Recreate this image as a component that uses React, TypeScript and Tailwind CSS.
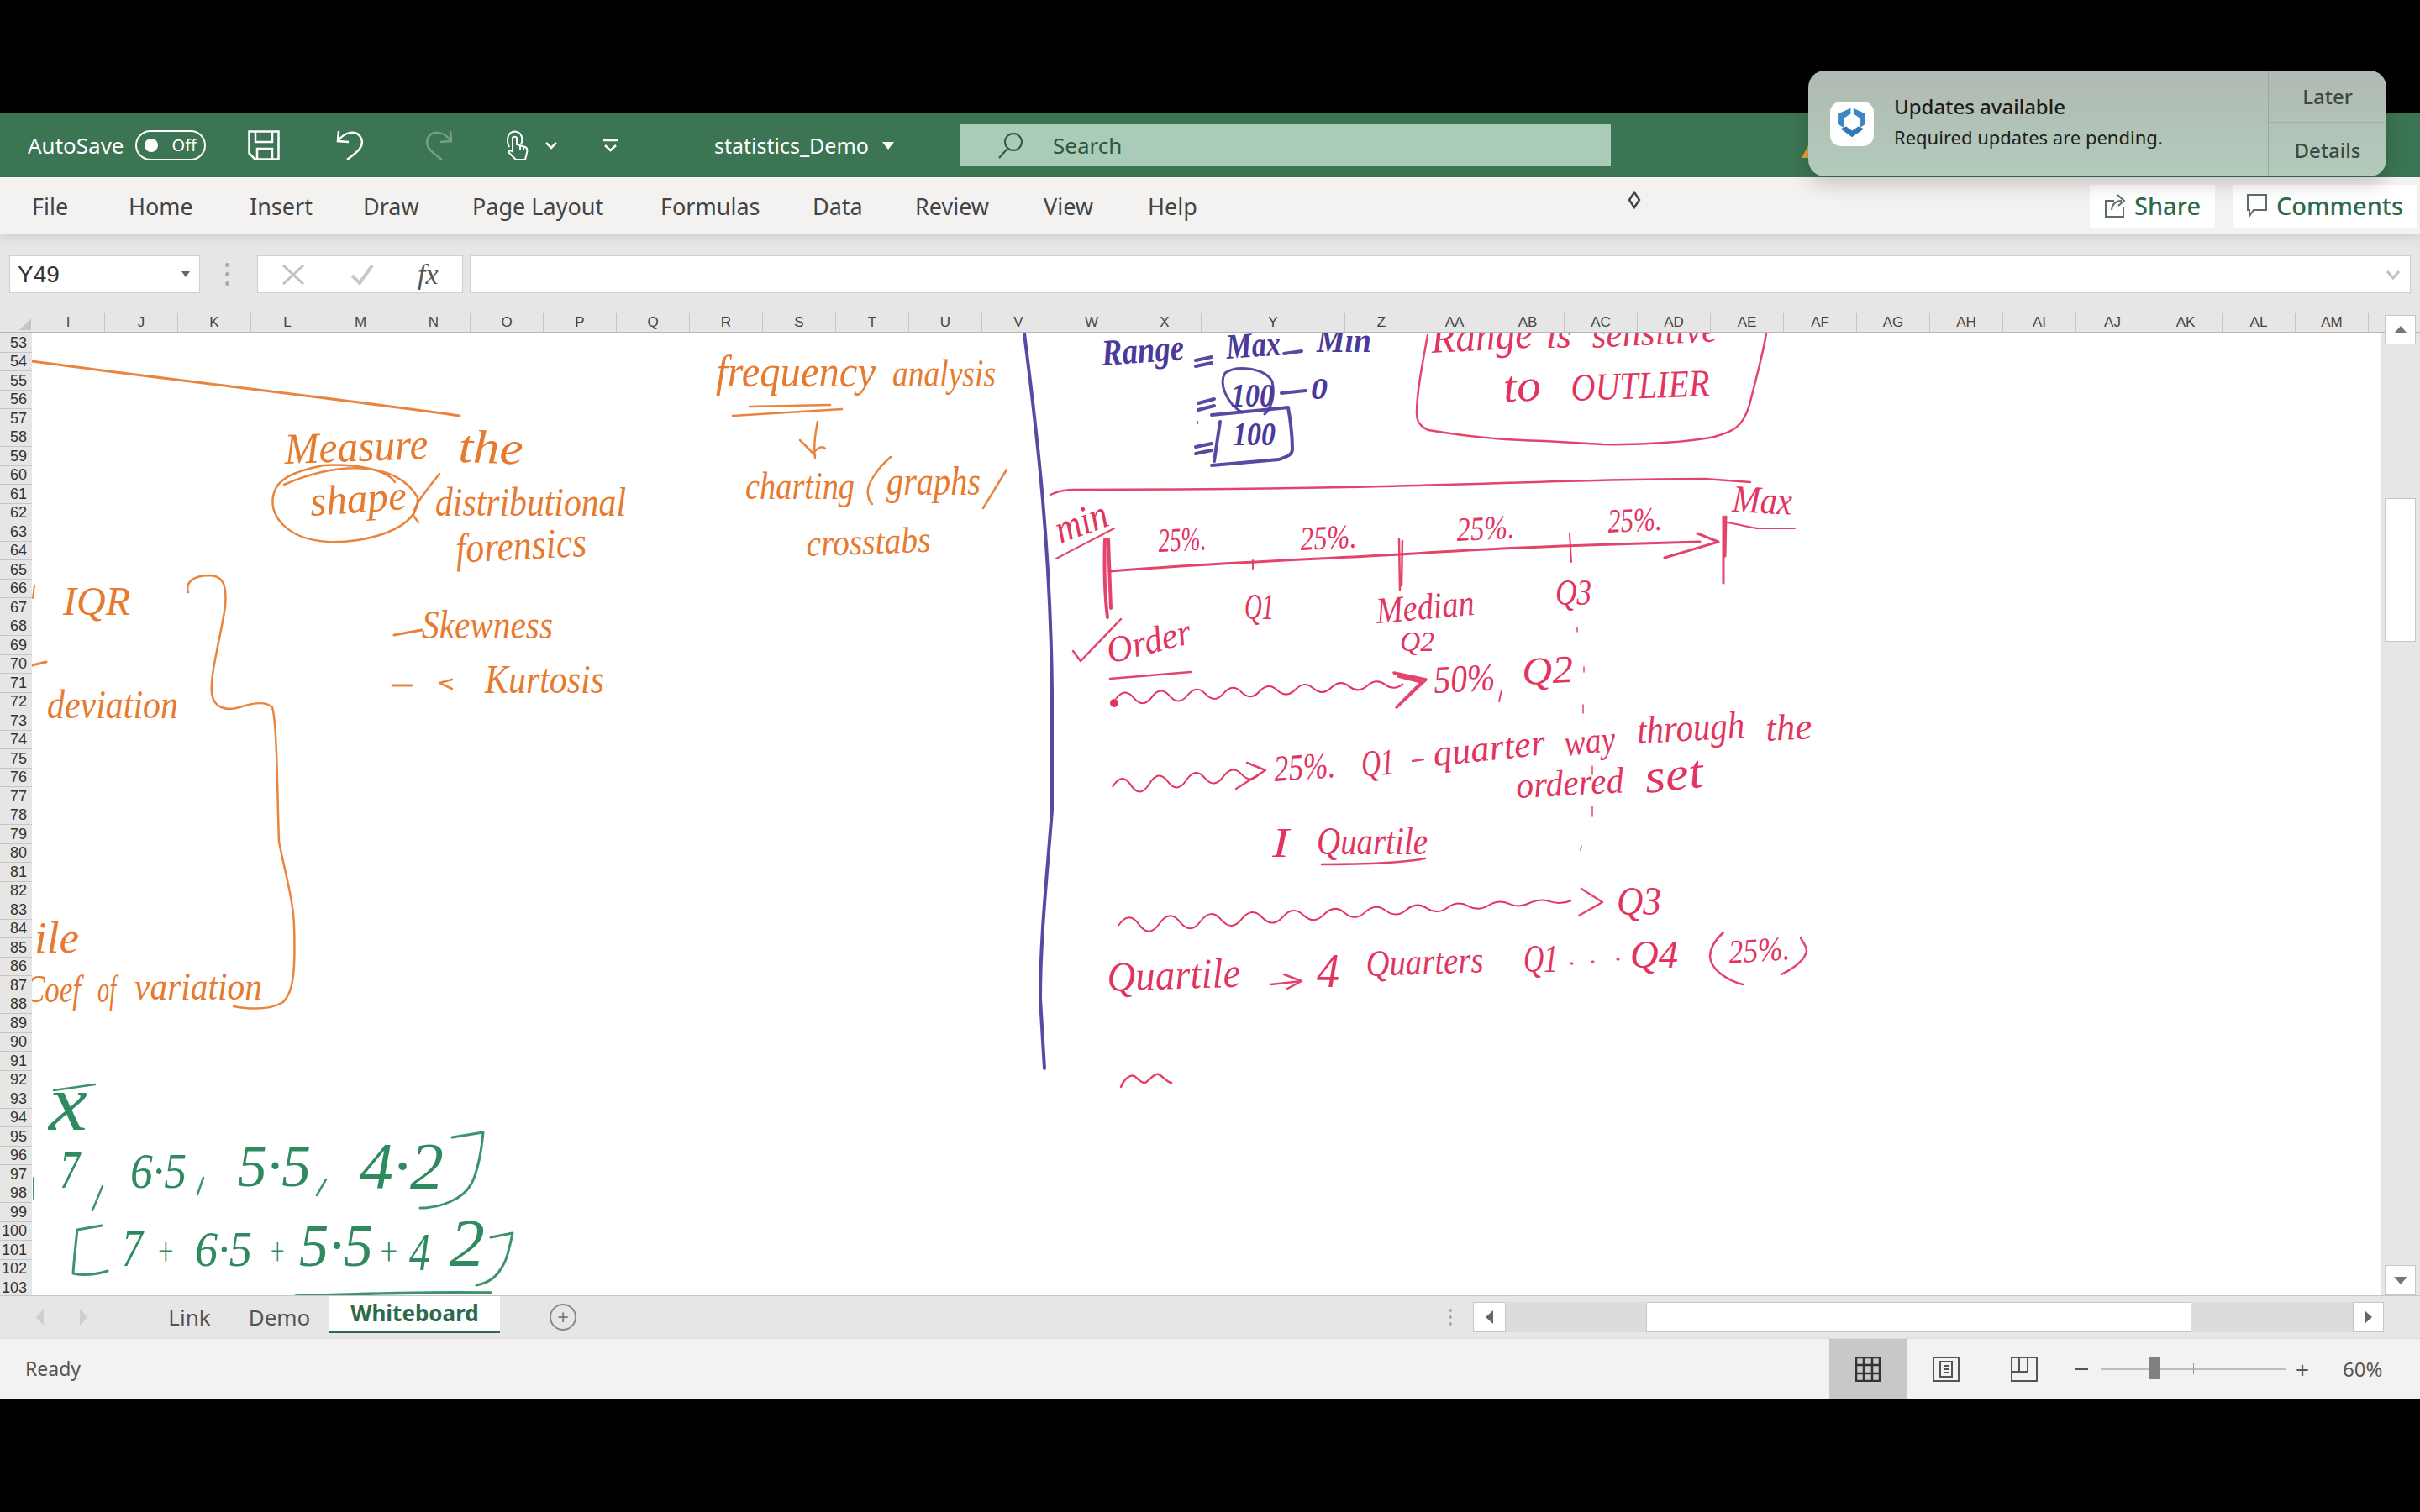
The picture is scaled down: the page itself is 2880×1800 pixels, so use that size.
const ORANGE = "#e67a2e";
const PURPLE = "#4a3a9a";
const PINK = "#e2345f";
const GREEN = "#2f8a60";

const leftCols = ["I", "J", "K", "L", "M", "N", "O", "P", "Q", "R", "S", "T", "U", "V", "W", "X"];
const rightCols = ["Z", "AA", "AB", "AC", "AD", "AE", "AF", "AG", "AH", "AI", "AJ", "AK", "AL", "AM"];
const rows = Array.from({ length: 51 }, (_, i) => 53 + i);

// handwritten words: text, left, right, baseline, colour, size, rotation
type Note = [string, number, number, number, string, number, number?, number?];
const notes: Note[] = [
  ["Measure", 339, 510, 550, ORANGE, 52, -2],
  ["the", 545, 622, 548, ORANGE, 56, 2],
  ["shape", 370, 485, 612, ORANGE, 50, -4],
  ["distributional", 518, 745, 612, ORANGE, 48],
  ["forensics", 543, 699, 668, ORANGE, 50, -3],
  ["IQR", 75, 155, 730, ORANGE, 48],
  ["Skewness", 502, 658, 758, ORANGE, 48],
  ["Kurtosis", 577, 719, 823, ORANGE, 48],
  ["deviation", 56, 212, 853, ORANGE, 48],
  ["ile", 41, 94, 1132, ORANGE, 52],
  ["Coef", 30, 96, 1191, ORANGE, 46],
  ["of", 116, 138, 1191, ORANGE, 46],
  ["variation", 160, 312, 1188, ORANGE, 46],
  ["frequency", 852, 1042, 458, ORANGE, 52],
  ["analysis", 1062, 1185, 458, ORANGE, 46],
  ["charting", 887, 1017, 592, ORANGE, 46],
  ["graphs", 1055, 1167, 587, ORANGE, 48],
  ["crosstabs", 960, 1108, 660, ORANGE, 44, -2],

  ["x", 58, 104, 1343, GREEN, 95],
  ["7", 71, 95, 1412, GREEN, 64],
  ["6·5", 155, 222, 1412, GREEN, 60],
  ["5·5", 283, 370, 1410, GREEN, 72],
  ["4·2", 428, 528, 1412, GREEN, 78],
  ["7", 145, 170, 1505, GREEN, 64],
  ["+", 186, 208, 1505, GREEN, 50],
  ["6·5", 232, 300, 1505, GREEN, 60],
  ["+", 320, 340, 1505, GREEN, 50],
  ["5·5", 356, 444, 1505, GREEN, 72],
  ["+", 450, 475, 1505, GREEN, 50],
  ["4", 487, 512, 1510, GREEN, 64],
  ["2", 535, 577, 1505, GREEN, 80],

  ["Range", 1312, 1410, 433, PURPLE, 44, -4, 700],
  ["Max", 1460, 1525, 425, PURPLE, 42, -4, 700],
  ["Min", 1567, 1632, 417, PURPLE, 40, 0, 700],
  ["100", 1465, 1516, 482, PURPLE, 40, 0, 700],
  ["0", 1560, 1580, 473, PURPLE, 36, 0, 700],
  ["100", 1467, 1518, 528, PURPLE, 40, 0, 700],

  ["Range", 1704, 1825, 418, PINK, 50, -3],
  ["is", 1840, 1870, 412, PINK, 44],
  ["sensitive", 1895, 2045, 412, PINK, 44, -3],
  ["to", 1790, 1835, 477, PINK, 54, -4],
  ["OUTLIER", 1870, 2035, 475, PINK, 46, -2],
  ["min", 1262, 1326, 645, PINK, 48, -20],
  ["Max", 2061, 2132, 607, PINK, 46, 3],
  ["25%.", 1379, 1436, 655, PINK, 40, -3],
  ["25%.", 1548, 1615, 653, PINK, 40, -3],
  ["25%.", 1734, 1803, 642, PINK, 40, -3],
  ["25%.", 1914, 1978, 632, PINK, 40, -3],
  ["Q1", 1481, 1516, 735, PINK, 44],
  ["Q3", 1851, 1894, 718, PINK, 44],
  ["Median", 1639, 1756, 740, PINK, 44, -5],
  ["Q2", 1666, 1707, 773, PINK, 34],
  ["Order", 1321, 1423, 788, PINK, 44, -14],
  ["50%", 1707, 1780, 823, PINK, 46, -3],
  ["Q2", 1812, 1873, 813, PINK, 46, -3],
  ["25%.", 1517, 1590, 928, PINK, 44, -4],
  ["Q1", 1621, 1660, 922, PINK, 44, -4],
  ["quarter", 1707, 1841, 910, PINK, 44, -6],
  ["way", 1863, 1924, 898, PINK, 44, -6],
  ["through", 1949, 2077, 883, PINK, 46, -3],
  ["the", 2102, 2157, 880, PINK, 44, -3],
  ["ordered", 1805, 1933, 948, PINK, 44, -3],
  ["set", 1959, 2029, 942, PINK, 56, -6],
  ["I", 1514, 1534, 1018, PINK, 50],
  ["Quartile", 1567, 1699, 1015, PINK, 46],
  ["Q3", 1924, 1977, 1087, PINK, 48],
  ["Quartile", 1318, 1477, 1178, PINK, 50, -2],
  ["4", 1567, 1594, 1173, PINK, 56],
  ["Quarters", 1626, 1766, 1160, PINK, 44, -2],
  ["Q1", 1813, 1854, 1155, PINK, 46],
  ["Q4", 1940, 1997, 1150, PINK, 46],
  ["25%.", 2058, 2131, 1145, PINK, 40, -4],
];

// plain ink strokes
const strokes: [string, string, number?][] = [
  ["M38 428 C200 450 400 472 547 493", ORANGE, 3],
  ["M338 575 C400 548 470 545 497 590 C500 630 430 645 390 643 C340 640 318 610 326 585 C330 570 345 560 385 552 C420 550 460 556 470 572", ORANGE, 2.5],
  ["M523 562 C505 585 492 600 492 612 L498 620", ORANGE, 2.5],
  ["M224 703 C220 690 232 683 250 683 C266 684 270 695 268 720 C262 760 250 800 252 823 C254 840 268 845 285 840 C300 835 316 832 324 840 C330 860 330 950 332 1000 C340 1040 349 1070 350 1100 C352 1160 348 1180 337 1191 C322 1200 300 1200 278 1196", ORANGE, 2.5],
  ["M469 754 L502 748", ORANGE, 3],
  ["M467 814 L490 814", ORANGE, 3],
  ["M538 807 L523 811 L538 818", ORANGE, 2.5],
  ["M38 790 L55 786", ORANGE, 3],
  ["M39 710 L41 695", ORANGE, 2],
  ["M892 482 L988 480", ORANGE, 2.5],
  ["M872 493 L1002 485", ORANGE, 2.5],
  ["M973 500 C970 515 968 530 970 543 M952 522 L970 540 M968 537 C972 532 978 528 982 532", ORANGE, 2.5],
  ["M1060 542 C1045 555 1030 575 1033 587 C1034 594 1036 596 1038 598", ORANGE, 2.5],
  ["M1198 557 L1170 603", ORANGE, 2.5],

  ["M64 1296 L113 1289", GREEN, 2.5],
  ["M122 1410 L110 1439 M242 1400 L235 1420 M388 1402 L377 1421", GREEN, 2.5],
  ["M538 1352 L575 1346 C572 1380 565 1400 561 1407 C552 1425 525 1436 500 1436", GREEN, 3],
  ["M121 1457 L92 1462 C90 1480 88 1500 87 1514 C100 1517 115 1515 128 1511", GREEN, 3],
  ["M584 1471 L610 1466 C605 1490 602 1500 597 1507 C590 1520 578 1526 567 1528", GREEN, 3],
  ["M352 1541 C430 1538 510 1536 584 1537", GREEN, 3.5],
  ["M40 1400 L40 1425", GREEN, 2],

  ["M1219 395 C1235 520 1250 650 1252 820 L1252 963 C1245 1050 1238 1120 1238 1187 L1243 1270", PURPLE, 4],
  ["M1423 427 L1442 423 M1423 434 L1442 430", PURPLE, 4],
  ["M1528 419 L1549 416", PURPLE, 4],
  ["M1426 478 L1445 473 M1426 486 L1445 481", PURPLE, 4],
  ["M1478 489 C1460 478 1450 455 1458 442 C1472 432 1505 436 1514 452 C1518 470 1512 485 1505 491", PURPLE, 3],
  ["M1525 466 L1554 463", PURPLE, 4],
  ["M1442 492 L1533 483 C1536 500 1538 520 1538 533 C1538 540 1530 542 1522 545 L1442 552 M1452 500 L1445 547", PURPLE, 4],
  ["M1423 530 L1442 526 M1423 538 L1442 534", PURPLE, 4],
  ["M1425 500 L1425 502", PURPLE, 2],

  ["M1699 397 C1693 430 1686 465 1686 490 C1686 500 1690 506 1700 510 C1760 520 1800 522 1838 523 L1908 527 C1960 528 2016 523 2040 518 C2062 512 2074 507 2082 480 C2092 440 2098 420 2102 395", PINK, 2.5],
  ["M1250 587 C1258 583 1268 581 1277 581 C1400 581 1520 580 1646 577 C1780 574 1910 568 2029 568 L2083 572", PINK, 2.5],
  ["M1257 663 L1326 627", PINK, 2],
  ["M1315 640 C1314 670 1314 700 1318 733 M1319 640 C1320 670 1321 695 1322 722", PINK, 4],
  ["M1321 678 C1440 668 1560 664 1666 658 C1760 651 1870 647 2023 643", PINK, 3],
  ["M1981 662 L2045 643 L2020 633", PINK, 3],
  ["M2051 613 L2051 692 M2054 613 L2053 660", PINK, 3],
  ["M2055 620 C2070 622 2085 627 2093 627 L2136 627", PINK, 2],
  ["M1491 665 L1491 675", PINK, 2],
  ["M1665 640 L1666 700 M1669 642 L1668 695", PINK, 2.5],
  ["M1868 633 L1870 667", PINK, 2],
  ["M1277 773 L1286 785 L1334 735", PINK, 2.5],
  ["M1321 806 L1417 798", PINK, 2.5],
  ["M1659 799 L1697 807 L1662 840 M1664 803 L1692 810 L1670 832", PINK, 3.5],
  ["M1787 820 L1784 833", PINK, 2],
  ["M1877 745 L1877 750 M1885 792 L1885 798 M1884 837 L1884 847 M1895 910 L1895 920 M1895 958 L1895 970 M1882 1005 L1881 1010", PINK, 1.5],
  ["M1484 906 L1506 915 L1471 937", PINK, 2.5],
  ["M1681 904 L1694 902", PINK, 2.5],
  ["M1573 1027 C1620 1027 1670 1025 1696 1020", PINK, 2.5],
  ["M1882 1056 L1907 1072 L1879 1088", PINK, 2.5],
  ["M1512 1170 L1549 1166 M1528 1158 L1549 1166 L1532 1175", PINK, 2.5],
  ["M1870 1145 L1871 1145 M1895 1143 L1896 1143 M1925 1140 L1926 1140", PINK, 3],
  ["M2051 1108 C2040 1118 2035 1128 2035 1137 C2036 1152 2055 1165 2074 1170", PINK, 2.5],
  ["M2143 1115 C2148 1122 2150 1126 2150 1130 C2148 1142 2132 1152 2120 1158", PINK, 2.5],
  ["M1334 1292 C1338 1282 1345 1277 1350 1279 C1354 1282 1358 1288 1363 1287 C1368 1284 1374 1275 1379 1277 C1384 1279 1388 1286 1394 1287", PINK, 2.5],
];

// squiggly arrow shafts, the wave dies down towards the head
function wave(x1: number, y1: number, x2: number, y2: number, period: number, a1: number, a2: number) {
  const n = Math.round((x2 - x1) / (period / 2));
  let d = `M${x1} ${y1}`;
  for (let i = 0; i < n; i++) {
    const t0 = i / n;
    const t1 = (i + 1) / n;
    const amp = (a1 + (a2 - a1) * t0) * (i % 2 ? 1 : -1) * 2;
    const mx = x1 + (x2 - x1) * (t0 + t1) / 2;
    const my = y1 + (y2 - y1) * (t0 + t1) / 2 + amp;
    d += ` Q${mx.toFixed(1)} ${my.toFixed(1)} ${(x1 + (x2 - x1) * t1).toFixed(1)} ${(y1 + (y2 - y1) * t1).toFixed(1)}`;
  }
  return d;
}

function InkCanvas() {
  return (
    <svg className="block w-[2795px] h-[1147px] bg-white" viewBox="38 395 2795 1147">
      {strokes.map(([d, c, w], i) => (
        <path key={i} d={d} fill="none" stroke={c} strokeWidth={w ?? 2.5} strokeLinecap="round" strokeLinejoin="round" opacity={0.92} />
      ))}
      <path d={wave(1328, 830, 1670, 812, 43, 7, 4)} fill="none" stroke={PINK} strokeWidth={2} />
      <circle cx={1326} cy={835} r={5} fill={PINK} />
      <path d={wave(1324, 935, 1500, 918, 44, 9, 6)} fill="none" stroke={PINK} strokeWidth={2} />
      <path d={wave(1331, 1100, 1870, 1070, 48, 9, 2)} fill="none" stroke={PINK} strokeWidth={2} />
      {notes.map(([text, x1, x2, y, c, size, rot, weight], i) => (
        <text
          key={i}
          x={x1}
          y={y}
          fill={c}
          fontSize={size}
          fontStyle="italic"
          fontWeight={weight ?? 400}
          fontFamily="'Liberation Serif', serif"
          textLength={x2 - x1}
          lengthAdjust="spacingAndGlyphs"
          transform={rot ? `rotate(${rot} ${x1} ${y})` : undefined}
        >
          {text}
        </text>
      ))}
    </svg>
  );
}

function TitleBar() {
  return (
    <div className="relative flex h-[76px] shrink-0 items-center bg-[#3c7553] text-white">
      <span className="ml-[33px] w-[128px] text-[26px] leading-none">AutoSave</span>
      <div className="flex h-[36px] w-[84px] items-center justify-between rounded-full border-2 border-white px-[9px]">
        <span className="h-[16px] w-[16px] rounded-full bg-white" />
        <span className="text-[20px] leading-none">Off</span>
      </div>
      <svg className="ml-[50px]" width="38" height="36" viewBox="0 0 38 36" fill="none" stroke="white" strokeWidth="2.5">
        <path d="M1.5 1.5H36.5V34.5H8.5L1.5 27.5Z" />
        <path d="M9 1.5V14H29V1.5M11 34.5V22H29V34.5" />
      </svg>
      <svg className="ml-[67px]" width="34" height="36" viewBox="0 0 34 36" fill="none" stroke="white" strokeWidth="2.5">
        <path d="M3 1L2 13L15 14M2 13C10 2 25 -2 30 10C34 20 24 27 13 35" />
      </svg>
      <svg className="ml-[71px] opacity-30" width="34" height="36" viewBox="0 0 34 36" fill="none" stroke="white" strokeWidth="2.5">
        <path d="M31 1L32 13L19 14M32 13C24 2 9 -2 4 10C0 20 10 27 21 35" />
      </svg>
      <svg className="ml-[63px]" width="27" height="37" viewBox="0 0 27 37" fill="none" stroke="white" strokeWidth="2">
        <path d="M4 20C0 12 2 2 10.5 1.5C19 2 21 10 18 17" />
        <path d="M8 26V10C8 7 13 7 13 10V17L23 20C25 21 26 23 25 27L23 35H12L4 27C3 24 6 23 8 26" />
        <path d="M17 18V24M21 19V24" />
      </svg>
      <svg className="ml-[20px]" width="14" height="9" viewBox="0 0 14 9" fill="none" stroke="white" strokeWidth="2.5">
        <path d="M1 1L7 7L13 1" />
      </svg>
      <svg className="ml-[55px]" width="17" height="16" viewBox="0 0 17 16" fill="none" stroke="white" strokeWidth="2.5">
        <path d="M0 2H17M2 8L8.5 14L15 8" />
      </svg>
      <span className="ml-[115px] w-[184px] text-[25px] leading-none">statistics_Demo</span>
      <span className="ml-[16px] h-0 w-0 border-x-[7px] border-t-[9px] border-x-transparent border-t-white" />
      <div className="ml-[79px] flex h-[50px] w-[774px] items-center bg-[#abcbb9] pl-[45px] text-[#2c5743]">
        <svg width="30" height="32" viewBox="0 0 30 32" fill="none" stroke="#2c5743" strokeWidth="2">
          <circle cx="18" cy="12" r="10" />
          <path d="M11 20L1 31" />
        </svg>
        <span className="ml-[35px] text-[26px] leading-none">Search</span>
      </div>
      {/* tip of something orange, sticks out from behind the toast */}
      <span className="absolute left-[2144px] top-[38px] h-0 w-0 border-b-[15px] border-l-[8px] border-b-[#e8a13c] border-l-transparent" />
    </div>
  );
}

function Ribbon() {
  const tabs: [string, string][] = [
    ["File", "w-[115px]"],
    ["Home", "w-[144px]"],
    ["Insert", "w-[135px]"],
    ["Draw", "w-[130px]"],
    ["Page Layout", "w-[224px]"],
    ["Formulas", "w-[181px]"],
    ["Data", "w-[122px]"],
    ["Review", "w-[153px]"],
    ["View", "w-[124px]"],
    ["Help", "w-[100px]"],
  ];
  return (
    <div className="relative z-10 flex h-[68px] shrink-0 items-center bg-[#f3f2f1] pl-[38px] text-[27px] text-[#444] shadow-[0_5px_10px_rgba(0,0,0,0.08)]">
      {tabs.map(([name, w]) => (
        <span key={name} className={`${w} leading-none`}>
          {name}
        </span>
      ))}
      <svg className="ml-[468px] mb-[14px]" width="22" height="22" viewBox="0 0 22 22" fill="none" stroke="#444" strokeWidth="2.5">
        <path d="M11 2L17 11L11 20L5 11Z" />
      </svg>
      <div className="ml-[531px] flex h-[51px] w-[149px] items-center justify-center gap-[10px] bg-white text-[29px] text-[#2c6a4e]">
        <svg width="26" height="30" viewBox="0 0 26 30" fill="none" stroke="#5b6f66" strokeWidth="2">
          <path d="M12 9H2V28H23V16M9 20C10 12 15 9 21 9M16 2L24 9L17 15" />
        </svg>
        <span className="font-medium">Share</span>
      </div>
      <div className="ml-[21px] flex h-[51px] w-[219px] items-center justify-center gap-[10px] bg-white text-[29px] text-[#2c6a4e]">
        <svg width="26" height="30" viewBox="0 0 26 30" fill="none" stroke="#5b6f66" strokeWidth="2">
          <path d="M2 2H24V20H9L4 27V20H2Z" />
        </svg>
        <span className="font-medium">Comments</span>
      </div>
    </div>
  );
}

function FormulaBar() {
  return (
    <div className="flex h-[94px] shrink-0 bg-[#e6e6e6] pt-[25px]">
      <div className="ml-[11px] flex h-[45px] w-[227px] items-center justify-between border border-[#cfcfcf] bg-white pl-[9px] pr-[11px] font-['Liberation_Sans',sans-serif] text-[28px] text-[#333]">
        <span>Y49</span>
        <span className="h-0 w-0 border-x-[5px] border-t-[7px] border-x-transparent border-t-[#666]" />
      </div>
      <div className="ml-[30px] flex h-[45px] w-[5px] flex-col justify-center gap-[6px]">
        <span className="h-[5px] w-[5px] rounded-full bg-[#aaa]" />
        <span className="h-[5px] w-[5px] rounded-full bg-[#aaa]" />
        <span className="h-[5px] w-[5px] rounded-full bg-[#aaa]" />
      </div>
      <div className="ml-[33px] flex h-[45px] w-[245px] items-center border border-[#cfcfcf] bg-white pl-[28px]">
        <svg width="28" height="24" viewBox="0 0 28 24" fill="none" stroke="#c0c0c0" strokeWidth="3">
          <path d="M2 1L26 23M26 1L2 23" />
        </svg>
        <svg className="ml-[54px]" width="28" height="26" viewBox="0 0 28 26" fill="none" stroke="#c8c8c8" strokeWidth="4">
          <path d="M2 14L11 23L26 2" />
        </svg>
        <span className="ml-[52px] font-['Liberation_Serif',serif] text-[34px] italic leading-none text-[#555]">fx</span>
      </div>
      <div className="ml-[8px] flex h-[45px] w-[2310px] items-center justify-end border border-[#cfcfcf] bg-white pr-[11px]">
        <svg width="18" height="12" viewBox="0 0 18 12" fill="none" stroke="#c0c0c0" strokeWidth="3">
          <path d="M2 2L9 10L16 2" />
        </svg>
      </div>
    </div>
  );
}

function ColHead({ name, wide }: { name: string; wide?: boolean }) {
  return (
    <span className={`${wide ? "w-[171px]" : "w-[87px]"} flex h-full shrink-0 items-center justify-center border-r border-[#c6c6c6] text-[#444]`}>
      {name}
    </span>
  );
}

function ColumnHeader() {
  return (
    <div className="flex h-[22px] shrink-0 bg-[#e6e6e6] font-['Liberation_Sans',sans-serif] text-[17px]">
      <div className="flex w-[38px] shrink-0 items-end justify-end pb-[2px] pr-[1px]">
        <span className="h-0 w-0 border-b-[14px] border-l-[14px] border-b-[#c4c4c4] border-l-transparent" />
      </div>
      {leftCols.map((c) => (
        <ColHead key={c} name={c} />
      ))}
      <ColHead name="Y" wide />
      {rightCols.map((c) => (
        <ColHead key={c} name={c} />
      ))}
    </div>
  );
}

function Sheet() {
  return (
    <div className="flex h-[1147px] shrink-0 border-t-2 border-[#b5b5b5] bg-[#e6e6e6]">
      <div className="w-[38px] shrink-0 overflow-hidden font-['Liberation_Sans',sans-serif] text-[18px] text-[#333]">
        {rows.map((r) => (
          <div key={r} className="flex h-[22.5px] items-center justify-end border-b border-[#c6c6c6] pr-[6px] leading-none">
            {r}
          </div>
        ))}
      </div>
      <div className="w-[2795px] shrink-0 overflow-hidden">
        <InkCanvas />
      </div>
      <div className="ml-[5px] flex w-[37px] shrink-0 flex-col">
        <div className="mt-[-22px] flex h-[35px] items-center justify-center border border-[#c6c6c6] bg-white">
          <span className="h-0 w-0 border-x-[8px] border-b-[9px] border-x-transparent border-b-[#777]" />
        </div>
        <div className="mt-[183px] h-[171px] border border-[#c6c6c6] bg-white" />
        <div className="mt-auto flex h-[36px] items-center justify-center border border-[#c6c6c6] bg-white">
          <span className="h-0 w-0 border-x-[8px] border-t-[9px] border-x-transparent border-t-[#777]" />
        </div>
      </div>
    </div>
  );
}

function SheetTabs() {
  return (
    <div className="flex h-[51px] shrink-0 items-center border-t border-[#c6c6c6] bg-[#e6e6e6] text-[26px]">
      <div className="flex w-[178px] shrink-0 items-center pl-[43px]">
        <span className="h-0 w-0 border-y-[10px] border-r-[9px] border-y-transparent border-r-[#cfcfcf]" />
        <span className="ml-[43px] h-0 w-0 border-y-[10px] border-l-[9px] border-y-transparent border-l-[#cfcfcf]" />
      </div>
      <span className="flex h-[40px] w-[94px] shrink-0 items-center justify-center border-l border-[#b5b5b5] text-[#555]">Link</span>
      <span className="flex h-[40px] w-[120px] shrink-0 items-center justify-center border-l border-[#b5b5b5] text-[#555]">Demo</span>
      <span className="mb-[6px] flex h-[44px] w-[203px] shrink-0 items-center justify-center border-b-[3px] border-[#2d6a4c] bg-white font-bold text-[#2d6a4c]">
        Whiteboard
      </span>
      <span className="ml-[59px] flex h-[32px] w-[32px] shrink-0 items-center justify-center rounded-full border-2 border-[#8a8a8a] text-[24px] leading-none text-[#777]">
        +
      </span>
      <div className="ml-[1038px] flex w-[5px] shrink-0 flex-col gap-[4px]">
        <span className="h-[4px] w-[4px] rounded-full bg-[#aaa]" />
        <span className="h-[4px] w-[4px] rounded-full bg-[#aaa]" />
        <span className="h-[4px] w-[4px] rounded-full bg-[#aaa]" />
      </div>
      <div className="ml-[24px] flex h-[36px] w-[39px] shrink-0 items-center justify-center border border-[#c6c6c6] bg-white">
        <span className="h-0 w-0 border-y-[8px] border-r-[9px] border-y-transparent border-r-[#666]" />
      </div>
      <div className="flex h-[36px] w-[1008px] shrink-0 bg-[#dcdcdc] pl-[167px]">
        <div className="h-full w-[649px] border border-[#c6c6c6] bg-white" />
      </div>
      <div className="flex h-[36px] w-[37px] shrink-0 items-center justify-center border border-[#c6c6c6] bg-white">
        <span className="h-0 w-0 border-y-[8px] border-l-[9px] border-y-transparent border-l-[#666]" />
      </div>
    </div>
  );
}

function StatusBar() {
  return (
    <div className="flex h-[72px] shrink-0 items-center border-t border-[#dcdcdc] bg-[#f3f2f1] text-[#555]">
      <span className="ml-[30px] w-[2147px] text-[23px] leading-none">Ready</span>
      <div className="flex h-full w-[92px] shrink-0 items-center justify-center bg-[#c8c8c8]">
        <svg width="30" height="30" viewBox="0 0 30 30" fill="none" stroke="#333" strokeWidth="2.5">
          <path d="M1 1H29V29H1ZM1 10H29M1 20H29M10 1V29M20 1V29" />
        </svg>
      </div>
      <svg className="ml-[31px]" width="32" height="30" viewBox="0 0 32 30" fill="none" stroke="#555" strokeWidth="2">
        <path d="M1 1H31V29H1ZM9 6H23V24H9ZM13 11H19M13 15H19M13 19H19" />
      </svg>
      <svg className="ml-[61px]" width="32" height="30" viewBox="0 0 32 30" fill="none" stroke="#555" strokeWidth="2">
        <path d="M1 1H31V29H1ZM1 18H20V1M10 1V18" />
      </svg>
      <span className="ml-[45px] h-[2px] w-[15px] bg-[#555]" />
      <div className="relative ml-[15px] h-[3px] w-[221px] bg-[#bdbdbd]">
        <span className="absolute left-[58px] top-[-12px] h-[26px] w-[12px] bg-[#808080]" />
        <span className="absolute left-[110px] top-[-5px] h-[13px] w-[1px] bg-[#999]" />
      </div>
      <span className="ml-[11px] text-[28px] leading-none">+</span>
      <span className="ml-[40px] text-[24px] leading-none">60%</span>
    </div>
  );
}

function UpdateToast() {
  return (
    <div className="absolute left-[2152px] top-[84px] z-20 flex h-[126px] w-[688px] overflow-hidden rounded-[20px] bg-gradient-to-b from-[#b1b9b3] to-[#b2cbbb] shadow-[0_8px_24px_rgba(0,0,0,0.2)]">
      <div className="flex w-[547px] items-center pl-[26px]">
        <svg className="shrink-0" width="52" height="53" viewBox="0 0 155 158">
          <rect width="155" height="158" rx="38" fill="white" />
          <path d="M73 23V43L50 58V93L27 80V43Z" fill="#3f86c4" />
          <path d="M83 23L125 43V80L105 93V58L83 43Z" fill="#3f86c4" />
          <path d="M37 96L57 88L78 103L100 88L120 96L78 126Z" fill="#2f78bb" />
        </svg>
        <div className="ml-[24px] mb-[5px] text-[#1c1c1c]">
          <div className="text-[24px] font-medium leading-none">Updates available</div>
          <div className="mt-[13px] text-[22px] leading-none">Required updates are pending.</div>
        </div>
      </div>
      <div className="flex flex-1 flex-col border-l border-[#97aa9d] text-[24px] text-[#3c4a42]">
        <div className="flex h-[63px] items-center justify-center border-b-2 border-[#9eb1a5] font-medium">Later</div>
        <div className="flex flex-1 items-center justify-center font-medium">Details</div>
      </div>
    </div>
  );
}

export default function App() {
  return (
    <div className="relative flex h-[1800px] w-[2880px] flex-col overflow-hidden bg-black pt-[135px] font-['Noto_Sans',sans-serif]">
      <TitleBar />
      <Ribbon />
      <FormulaBar />
      <ColumnHeader />
      <Sheet />
      <SheetTabs />
      <StatusBar />
      <UpdateToast />
    </div>
  );
}
